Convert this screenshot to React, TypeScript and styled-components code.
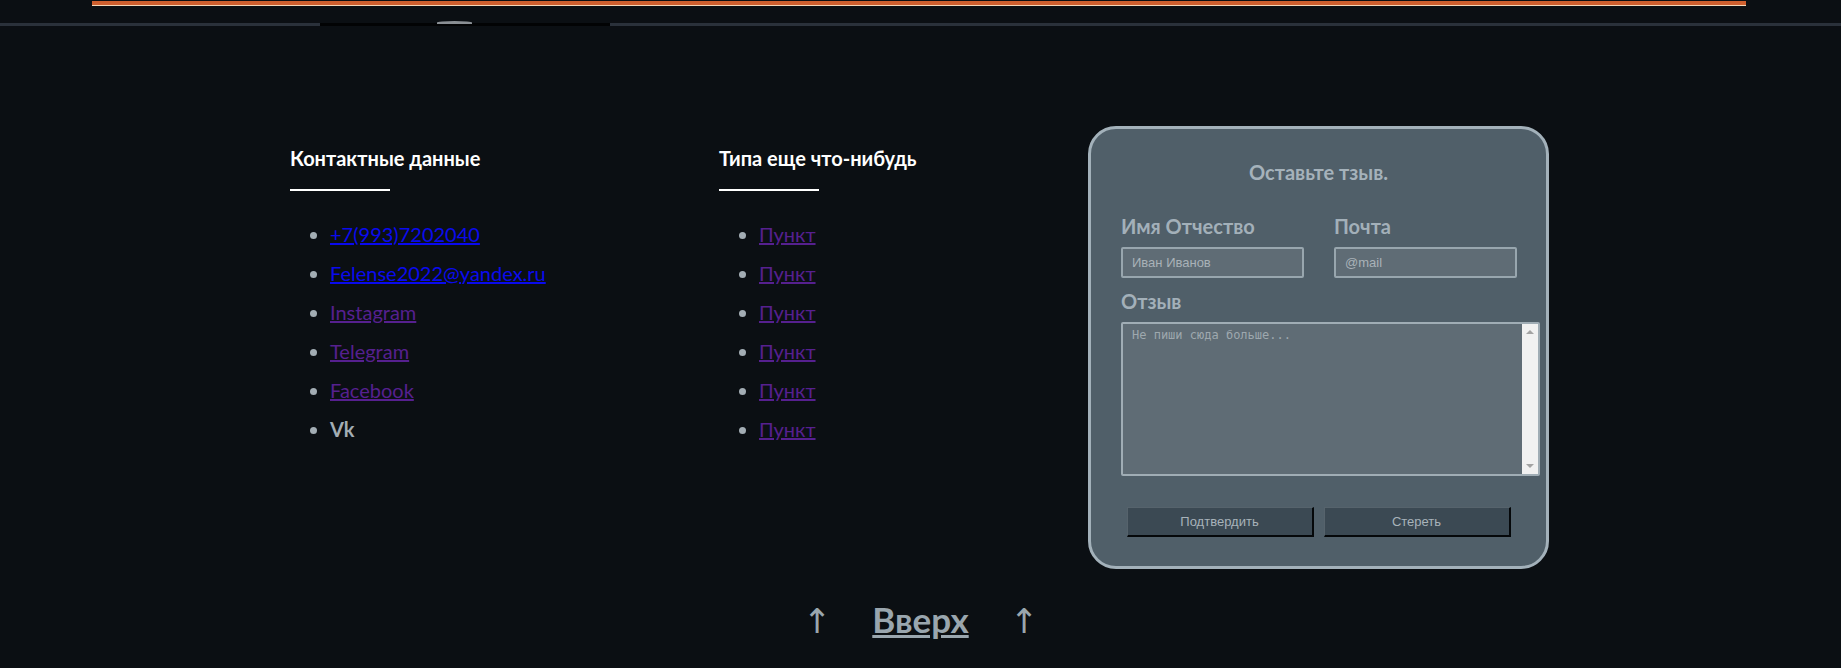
import React from 'react';
import styled, { createGlobalStyle } from 'styled-components';

const GlobalStyle = createGlobalStyle`
  html, body {
    margin: 0;
    padding: 0;
    background-color: #0b0f13;
  }

  body {
    font-family: Lato, "Noto Sans", sans-serif;
  }

  #root {
    min-height: 668px;
  }
`;

const Page = styled.div`
  width: 1841px;
  min-height: 668px;
  background-color: #0b0f13;
  overflow: hidden;
`;

const TopBar = styled.div`
  margin: 1px 95px 0 92px;
  height: 4px;
  background-color: #cf5f2e;
  border-bottom: 1px solid #f4d6b6;
`;

const NavLine = styled.div`
  display: flex;
  margin-top: 17px;
  height: 3px;
`;

const NavSegment = styled.div<{ $width?: number; $dark?: boolean }>`
  position: relative;
  flex: ${(p) => (p.$width ? `0 0 ${p.$width}px` : '1 1 auto')};
  background-color: ${(p) => (p.$dark ? '#020304' : '#2a313a')};
`;

const NavBump = styled.span`
  position: absolute;
  left: 117px;
  top: -2px;
  width: 35px;
  height: 3px;
  border-radius: 50% 50% 0 0;
  background-color: #8a8f94;
`;

const Footer = styled.footer`
  display: flex;
  align-items: flex-start;
  padding: 100px 0 0 290px;
`;

const Column = styled.div<{ $width: number }>`
  width: ${(p) => p.$width}px;
  padding-top: 20px;
`;

const ColumnTitle = styled.h3`
  margin: 0;
  font-size: 20px;
  font-weight: 700;
  color: #ffffff;
`;

const Divider = styled.div`
  width: 100px;
  height: 2px;
  margin-top: 19px;
  background-color: #ffffff;
`;

const LinkList = styled.ul`
  margin: 24px 0 0 0;
  padding-left: 40px;
  color: #a3adb4;
  font-size: 20px;
`;

const LinkItem = styled.li`
  line-height: 39px;
`;

const Link = styled.a<{ $visited?: boolean }>`
  color: ${(p) => (p.$visited ? '#56208f' : '#0a0aee')};
  text-decoration: underline;
`;

const Plain = styled.span`
  font-weight: 700;
  color: #a3adb4;
`;

const Card = styled.form`
  width: 461px;
  box-sizing: border-box;
  padding: 31px 0 29px 0;
  border: 3px solid #a3b1ba;
  border-radius: 28px;
  background-color: #505f69;
`;

const CardTitle = styled.div`
  text-align: center;
  font-size: 20px;
  font-weight: 700;
  color: #a5b2bb;
`;

const CardBody = styled.div`
  margin: 30px 0 0 30px;
`;

const FieldRow = styled.div`
  display: flex;
  gap: 30px;
`;

const Field = styled.label`
  display: flex;
  flex-direction: column;
`;

const FieldLabel = styled.span<{ $spaced?: boolean }>`
  display: block;
  margin: ${(p) => (p.$spaced ? '11px' : '0')} 0 9px 0;
  font-size: 20px;
  font-weight: 700;
  color: #a3b0b9;
`;

const TextInput = styled.input`
  width: 183px;
  height: 31px;
  box-sizing: border-box;
  padding: 0 9px;
  border: 2px solid #98a6ae;
  border-radius: 2px;
  background-color: #5f6c75;
  font-family: "Liberation Sans", Arial, sans-serif;
  font-size: 13px;
  color: #d0d6da;
  outline: none;

  &::placeholder {
    color: #a9b2b8;
  }
`;

const AreaWrap = styled.div`
  position: relative;
  width: 419px;
`;

const TextArea = styled.textarea`
  display: block;
  width: 419px;
  height: 154px;
  box-sizing: border-box;
  padding: 4px 25px 4px 9px;
  border: 2px solid #a0adb5;
  border-radius: 2px;
  background-color: #5f6c75;
  font-family: "DejaVu Sans Mono", "Liberation Mono", monospace;
  font-size: 12px;
  color: #d0d6da;
  resize: none;
  outline: none;

  &::placeholder {
    color: #9ea8ae;
  }
`;

const ScrollTrack = styled.div`
  position: absolute;
  top: 2px;
  right: 2px;
  bottom: 2px;
  width: 16px;
  display: flex;
  flex-direction: column;
  justify-content: space-between;
  align-items: center;
  padding: 6px 0;
  box-sizing: border-box;
  background-color: #f1f1f1;
  pointer-events: none;
`;

const ScrollArrow = styled.span<{ $down?: boolean }>`
  width: 0;
  height: 0;
  border-left: 4px solid transparent;
  border-right: 4px solid transparent;
  ${(p) =>
    p.$down ? 'border-top: 4px solid #a3a3a3;' : 'border-bottom: 4px solid #a3a3a3;'}
`;

const ButtonRow = styled.div`
  display: flex;
  justify-content: center;
  gap: 10px;
  margin-top: 31px;
`;

const Button = styled.button`
  width: 187px;
  height: 30px;
  box-sizing: border-box;
  border-style: solid;
  border-width: 1px 2px 2px 1px;
  border-color: #56636c #05080a #05080a #56636c;
  background-color: #3b4953;
  font-family: "Liberation Sans", Arial, sans-serif;
  font-size: 13px;
  color: #a8b3ba;
  cursor: pointer;
`;

const ToTop = styled.div`
  display: flex;
  justify-content: center;
  align-items: baseline;
  gap: 41px;
  margin-top: 29px;
  color: #9aa6ae;
`;

const Arrow = styled.span`
  font-family: "DejaVu Sans", sans-serif;
  font-size: 34px;
`;

const ToTopLink = styled.a`
  font-size: 35px;
  font-weight: 700;
  color: #9aa6ae;
  text-decoration: underline;
`;

const contacts = [
  { label: '+7(993)7202040', visited: false },
  { label: 'Felense2022@yandex.ru', visited: false },
  { label: 'Instagram', visited: true },
  { label: 'Telegram', visited: true },
  { label: 'Facebook', visited: true },
];

export default function App() {
  return (
    <Page>
      <GlobalStyle />
      <TopBar />
      <NavLine>
        <NavSegment $width={320} />
        <NavSegment $width={290} $dark>
          <NavBump />
        </NavSegment>
        <NavSegment />
      </NavLine>

      <Footer>
        <Column $width={429}>
          <ColumnTitle>Контактные данные</ColumnTitle>
          <Divider />
          <LinkList>
            {contacts.map((item) => (
              <LinkItem key={item.label}>
                <Link href="#" $visited={item.visited}>
                  {item.label}
                </Link>
              </LinkItem>
            ))}
            <LinkItem>
              <Plain>Vk</Plain>
            </LinkItem>
          </LinkList>
        </Column>

        <Column $width={369}>
          <ColumnTitle>Типа еще что-нибудь</ColumnTitle>
          <Divider />
          <LinkList>
            {[1, 2, 3, 4, 5, 6].map((n) => (
              <LinkItem key={n}>
                <Link href="#" $visited>
                  Пункт
                </Link>
              </LinkItem>
            ))}
          </LinkList>
        </Column>

        <Card onSubmit={(e) => e.preventDefault()}>
          <CardTitle>Оставьте тзыв.</CardTitle>
          <CardBody>
            <FieldRow>
              <Field>
                <FieldLabel>Имя Отчество</FieldLabel>
                <TextInput type="text" placeholder="Иван Иванов" />
              </Field>
              <Field>
                <FieldLabel>Почта</FieldLabel>
                <TextInput type="email" placeholder="@mail" />
              </Field>
            </FieldRow>
            <Field>
              <FieldLabel $spaced>Отзыв</FieldLabel>
              <AreaWrap>
                <TextArea placeholder="Не пиши сюда больше..." />
                <ScrollTrack>
                  <ScrollArrow />
                  <ScrollArrow $down />
                </ScrollTrack>
              </AreaWrap>
            </Field>
          </CardBody>
          <ButtonRow>
            <Button type="submit">Подтвердить</Button>
            <Button type="reset">Стереть</Button>
          </ButtonRow>
        </Card>
      </Footer>

      <ToTop>
        <Arrow>↑</Arrow>
        <ToTopLink href="#">Вверх</ToTopLink>
        <Arrow>↑</Arrow>
      </ToTop>
    </Page>
  );
}
